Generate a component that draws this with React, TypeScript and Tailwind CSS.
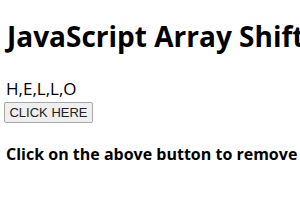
export default function App() {
  return (
    <div className="h-[210px] w-[300px] overflow-hidden bg-white px-[6px] text-black [font-family:'Open_Sans',sans-serif]">
      <h1 className="ml-[1px] mt-[20px] whitespace-nowrap text-[28px] font-bold leading-[32px]">
        JavaScript Array Shift()
      </h1>
      <p className="mt-[27px] text-[17px] leading-[20px]">H,E,L,L,O</p>
      <button
        type="button"
        className="-ml-[2px] mt-[1px] h-[21px] w-[89px] rounded-[2px] border border-[#a9a9a9] bg-[#efefef] text-[13px] leading-none text-[#222] [font-family:'Liberation_Sans',sans-serif]"
      >
        CLICK HERE
      </button>
      <p className="mt-[21px] whitespace-nowrap text-[16px] font-bold leading-[20px]">
        Click on the above button to remove the first element
      </p>
    </div>
  );
}
